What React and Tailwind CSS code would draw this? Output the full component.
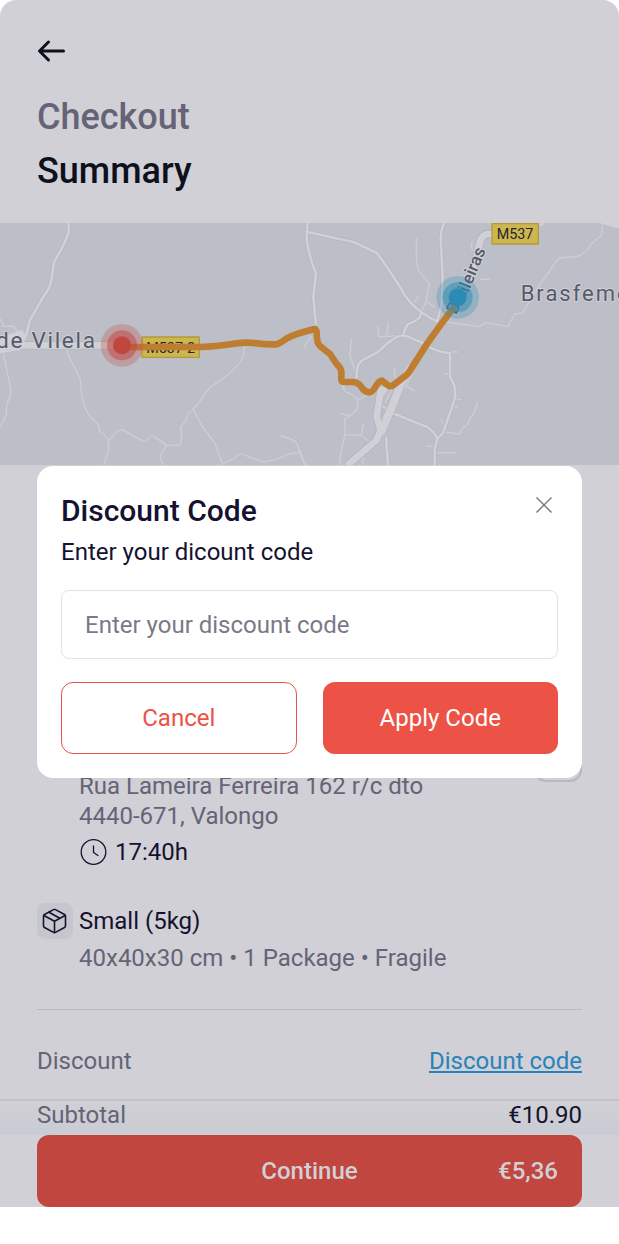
const minorRoads = [
  "M0 296 L12 320 L40 318 L54 336",
  "M10 400 L34 516 L20 556 L18 586 L0 622",
  "M198 384 L204 404 L240 474 L246 530 Q256 576 272 592 L296 614 L298 632 L314 646 L325 662 L326 692 L312 735",
  "M325 662 L346 640 Q360 624 372 632 L430 664 Q440 664 450 648 Q458 644 466 652 L500 676 L536 676 Q544 672 545 654 L542 620 L556 604 Q560 582 580 566 Q600 550 614 520 Q630 500 650 488 Q690 464 724 422 Q732 408 734 376",
  "M500 676 Q476 708 482 718 L492 735",
  "M580 566 L602 612 L646 672 L668 735",
  "M668 732 L704 714 Q720 694 730 704 L790 726 Q840 718 864 702 L902 696",
  "M842 648 Q880 656 890 670 Q900 700 908 718 L918 735",
  "M914 384 Q918 362 936 350",
  "M1250 54 Q1246 130 1256 152 L1288 190 L1278 244 L1304 262",
  "M1278 244 L1262 282 M1256 226 L1240 252",
  "M1440 178 H1470",
  "M1418 92 Q1410 72 1418 66",
  "M1340 306 L1438 320 L1456 308 L1524 320 L1544 282 L1568 280 Q1590 240 1622 190 L1676 114 L1730 110 Q1764 96 1770 76 L1804 46 L1808 9",
  "M1134 318 L1136 350 L1194 348 M1160 346 L1166 304",
  "M1054 356 L1050 408 L1064 446 L1072 450",
  "M1024 492 L1036 514 L1060 526 L1074 540 L1072 566 L1050 588 L1034 596 L1036 640 L1022 700 L1018 735",
  "M1050 588 L1022 580 M1030 510 L1034 488 L1080 494",
  "M1032 644 L1084 646 L1118 672 M1084 646 L1090 612",
  "M1092 680 L1088 735",
  "M1074 540 Q1096 530 1108 518",
  "M1334 636 L1378 642 Q1384 624 1402 614 L1412 590 Q1424 584 1432 546",
  "M1330 610 L1322 598 M1362 556 L1374 566 M1364 538 H1384 M1344 462 L1330 460 M1352 396 H1374",
  "M1304 698 H1368 M1302 680 L1280 678",
  "M1180 456 L1190 480 L1244 514 M1214 506 L1240 456",
  "M1184 440 L1184 470",
  "M1156 548 L1178 500 M1146 600 L1166 556",
  "M900 690 L914 735",
]

const localRoads = [
  "M206 9 V36 Q198 66 162 126 L154 180 Q150 206 132 226 L90 300 L78 350",
  "M922 9 L920 60 Q930 120 948 160 L940 230 L948 316",
  "M922 36 L1060 66 L1130 98 Q1180 166 1216 228 Q1250 276 1314 306",
  "M1332 9 Q1318 40 1324 90 L1328 180 L1324 260 L1310 308",
  "M1264 280 L1258 294 Q1240 308 1224 312 Q1208 340 1210 348",
  "M1070 476 Q1068 430 1086 422 L1134 396 Q1170 360 1196 348 L1218 348 L1270 370 Q1300 394 1350 400 L1350 472 Q1366 490 1366 530 Q1350 580 1328 640 L1312 656 L1304 690 V735",
  "M1142 554 L1184 582 L1280 620 Q1300 632 1312 656",
  "M1158 650 L1164 735",
]

const RouteMap = () => (
  <svg
    role="img"
    aria-label="Route map"
    viewBox="0 9 1857 726"
    preserveAspectRatio="xMidYMid slice"
    className="block w-full h-[242px] bg-[#bcbfc7]"
    fill="none"
    strokeLinejoin="round"
    fontFamily="Roboto, sans-serif"
  >
    <path d="M1798 9 L1857 26 V9 Z" fill="#d1d0d6" />
    <g stroke="#cdced4" strokeWidth="4">
      {minorRoads.map((d) => (
        <path key={d} d={d} />
      ))}
    </g>
    {/* Cada carretera lleva un borde oscuro debajo */}
    <g stroke="#b3b5be" strokeWidth="12">
      {localRoads.map((d) => (
        <path key={d} d={d} />
      ))}
    </g>
    <g stroke="#d1d0d6" strokeWidth="8">
      {localRoads.map((d) => (
        <path key={d} d={d} />
      ))}
    </g>

    <g stroke="#b3b5be" strokeWidth="25">
      <path d="M1142 514 L1130 590 L1142 630 L1130 660 L1040 738" />
      <path d="M1206 484 L1176 560 L1142 640" strokeWidth="28" />
      <path d="M1490 42 H1466 Q1446 42 1440 66 Q1430 100 1424 130 L1400 200 L1360 262" />
      <path d="M0 376 H370" />
    </g>
    <g stroke="#d1d0d6" strokeWidth="20">
      <path d="M1142 514 L1130 590 L1142 630 L1130 660 L1040 738" />
      <path d="M1236 440 L1206 484 L1176 560 L1142 640" strokeWidth="24" />
      <path d="M1490 42 H1466 Q1446 42 1440 66 Q1430 100 1424 130 L1400 200 L1360 262" />
      <path d="M0 376 H370" />
    </g>
    <path d="M1124 500 L1150 530 L1168 500 Z" fill="#d1d0d6" />
    <path d="M0 352 L66 330 L80 350 L60 390 L0 400 Z" fill="#d1d0d6" />
    <path d="M1620 16 L1630 9" stroke="#d1d0d6" strokeWidth="8" />

    <g stroke="#d1d0d6" strokeWidth="6" paintOrder="stroke" fill="#555a6c">
      <text x="-12" y="384" fontSize="68" letterSpacing="5">de Vilela</text>
      <text x="1562" y="244" fontSize="66" letterSpacing="6">Brasfemes</text>
      <text fontSize="52" fontWeight="500" transform="translate(1368 286) rotate(-63)">Bra</text>
      <text fontSize="52" fontWeight="500" transform="translate(1405 220) rotate(-68)">ileiras</text>
    </g>

    <rect x="1476" y="11" width="139" height="61" fill="#cdb64f" stroke="#b39b3b" strokeWidth="4" />
    <text x="1545" y="56" fontSize="43" textAnchor="middle" fill="#24262e">M537</text>
    <rect x="426" y="351" width="172" height="61" fill="#cdb64f" stroke="#b39b3b" strokeWidth="4" />
    <text x="512" y="398" fontSize="43" textAnchor="middle" fill="#24262e">M537-2</text>

    <path
      d="M366 381 H600 Q650 380 690 373 Q730 365 760 369 Q800 374 830 373 Q840 370 860 355 Q880 344 940 328 Q948 324 950 336 Q950 370 960 378 L990 402 L1010 432 Q1024 444 1024 458 V476 Q1024 486 1034 486 H1060 Q1078 488 1086 504 Q1096 517 1108 517 Q1118 516 1128 498 Q1138 482 1146 482 L1164 496 Q1172 502 1182 494 L1218 466 Q1226 460 1236 442 L1282 370 Q1320 316 1366 256"
      stroke="#bf7d32"
      strokeWidth="20"
    />

    <circle cx="366" cy="376" r="64" fill="#c24640" fillOpacity=".28" />
    <circle cx="366" cy="376" r="45" fill="#c24640" fillOpacity=".5" />
    <circle cx="366" cy="376" r="27" fill="#c24640" />
    <circle cx="1373" cy="232" r="64" fill="#2c8bb3" fillOpacity=".28" />
    <circle cx="1373" cy="232" r="45" fill="#2c8bb3" fillOpacity=".5" />
    <circle cx="1373" cy="232" r="27" fill="#2c8bb3" />
  </svg>
)

const ArrowIcon = () => (
  <svg className="w-7 h-6" viewBox="0 0 28 24" fill="none" stroke="currentColor" strokeWidth="3" strokeLinecap="round" strokeLinejoin="round">
    <path d="M26.5 12H2.5M11.5 3L2.5 12L11.5 21" />
  </svg>
)

const ClockIcon = () => (
  <svg className="w-7 h-7" viewBox="0 0 28 28" fill="none" stroke="currentColor" strokeWidth="1.3" strokeLinecap="round">
    <circle cx="14.5" cy="14" r="12.3" />
    <path d="M14.5 8V14.5L19 17.5" />
  </svg>
)

const BoxIcon = () => (
  <svg className="w-[26px] h-[26px]" viewBox="0 0 26 26" fill="none" stroke="currentColor" strokeWidth="1.6" strokeLinejoin="round" strokeLinecap="round">
    <path d="M11.500 1.600a2 2 0 0 1 2 0L22.500 6.500a2 2 0 0 1 1 1.700v9.600a2 2 0 0 1-1 1.700l-9 4.900a2 2 0 0 1-2 0l-9-4.900a2 2 0 0 1-1-1.700V8.200a2 2 0 0 1 1-1.700Z" />
    <path d="M1.900 7.500L12.500 13.300L23.100 7.500M12.500 13.300V24.500M7 4.200L17.800 10.200" />
  </svg>
)

const DiscountModal = () => (
  <div className="absolute inset-0 flex items-center justify-center px-[37px]">
    <div role="dialog" aria-labelledby="discount-title" className="w-full bg-white rounded-2xl p-6">
      <div className="flex justify-between items-start">
        <h2 id="discount-title" className="text-3xl leading-[42px] font-medium">Discount Code</h2>
        <button type="button" aria-label="Close" className="px-1.5 py-[7px] text-[#74727f]">
          <svg className="w-4 h-4" viewBox="0 0 16 16" fill="none" stroke="currentColor" strokeWidth="1.4">
            <path d="M.5 .5L15.5 15.5M15.5 .5L.5 15.5" />
          </svg>
        </button>
      </div>
      <label htmlFor="discount-code" className="block mt-[5px]">Enter your dicount code</label>
      <input
        id="discount-code"
        type="text"
        placeholder="Enter your discount code"
        className="block w-full h-[69px] mt-[23px] px-[23px] border border-[#e3e3e6] rounded-lg placeholder:text-[#7b7987]"
      />
      <div className="grid grid-cols-2 gap-[26px] mt-[23px]">
        <button type="button" className="h-[72px] border border-[#ec5245] rounded-xl text-[#ec5245]">Cancel</button>
        <button type="button" className="h-[72px] rounded-xl bg-[#ec5245] text-white">Apply Code</button>
      </div>
    </div>
  </div>
)

export default function App() {
  return (
    <div className="relative min-h-screen bg-white font-[Roboto,sans-serif] text-2xl leading-[30px] text-[#15122f]">
      <main className="bg-[#d1d0d6] rounded-t-2xl overflow-hidden">
        <header className="px-[37px] pt-9 pb-[25px]">
          <button type="button" aria-label="Back" className="flex items-center h-[30px] text-[#0c111c]">
            <ArrowIcon />
          </button>
          <h1 className="mt-6 text-4xl leading-[54px] font-medium text-[#0c111c]">
            <span className="block text-[#656376]">Checkout</span>
            Summary
          </h1>
        </header>

        <RouteMap />

        <div className="px-[37px] pt-[269px]">
          <div className="flex justify-between items-start pl-[42px] text-[#656376]">
            <div className="pt-[37px]">
              <p>Rua Lameira Ferreira 162 r/c dto</p>
              <p>4440-671, Valongo</p>
              <p className="flex items-center gap-2 mt-1.5 text-[#15122f]">
                <ClockIcon />
                17:40h
              </p>
            </div>
            <button type="button" aria-label="Edit address" className="w-12 h-12 border-2 border-[#b9b8c1] rounded-xl" />
          </div>

          <div className="flex gap-1.5 mt-9 pb-9 border-b border-[#bab9c1]">
            <div className="flex items-center justify-center w-9 h-9 rounded-lg bg-[#c6c7ce]">
              <BoxIcon />
            </div>
            <div>
              <p className="leading-9">Small (5kg)</p>
              <p className="mt-1 text-[#656376]">40x40x30 cm • 1 Package • Fragile</p>
            </div>
          </div>

          <div className="flex justify-between pt-9 pb-[23px]">
            <span className="text-[#656376]">Discount</span>
            <a href="#discount-code" className="text-[#2883b9] underline underline-offset-2">Discount code</a>
          </div>
        </div>

        <div className="flex justify-between px-[37px] pb-1.5 border-t-2 border-[#c3c2ca] leading-7 bg-linear-to-b from-[#d1d0d6] to-[#c9ccd3]">
          <span className="text-[#656376]">Subtotal</span>
          <span>€10.90</span>
        </div>
        <footer className="px-[37px]">
          <button type="button" className="grid grid-cols-3 items-center w-full h-[72px] px-6 rounded-xl bg-[#c0463f] font-medium text-[#d1d0d6]">
            <span className="col-start-2">Continue</span>
            <span className="text-right">€5,36</span>
          </button>
        </footer>
      </main>

      <DiscountModal />
    </div>
  )
}
